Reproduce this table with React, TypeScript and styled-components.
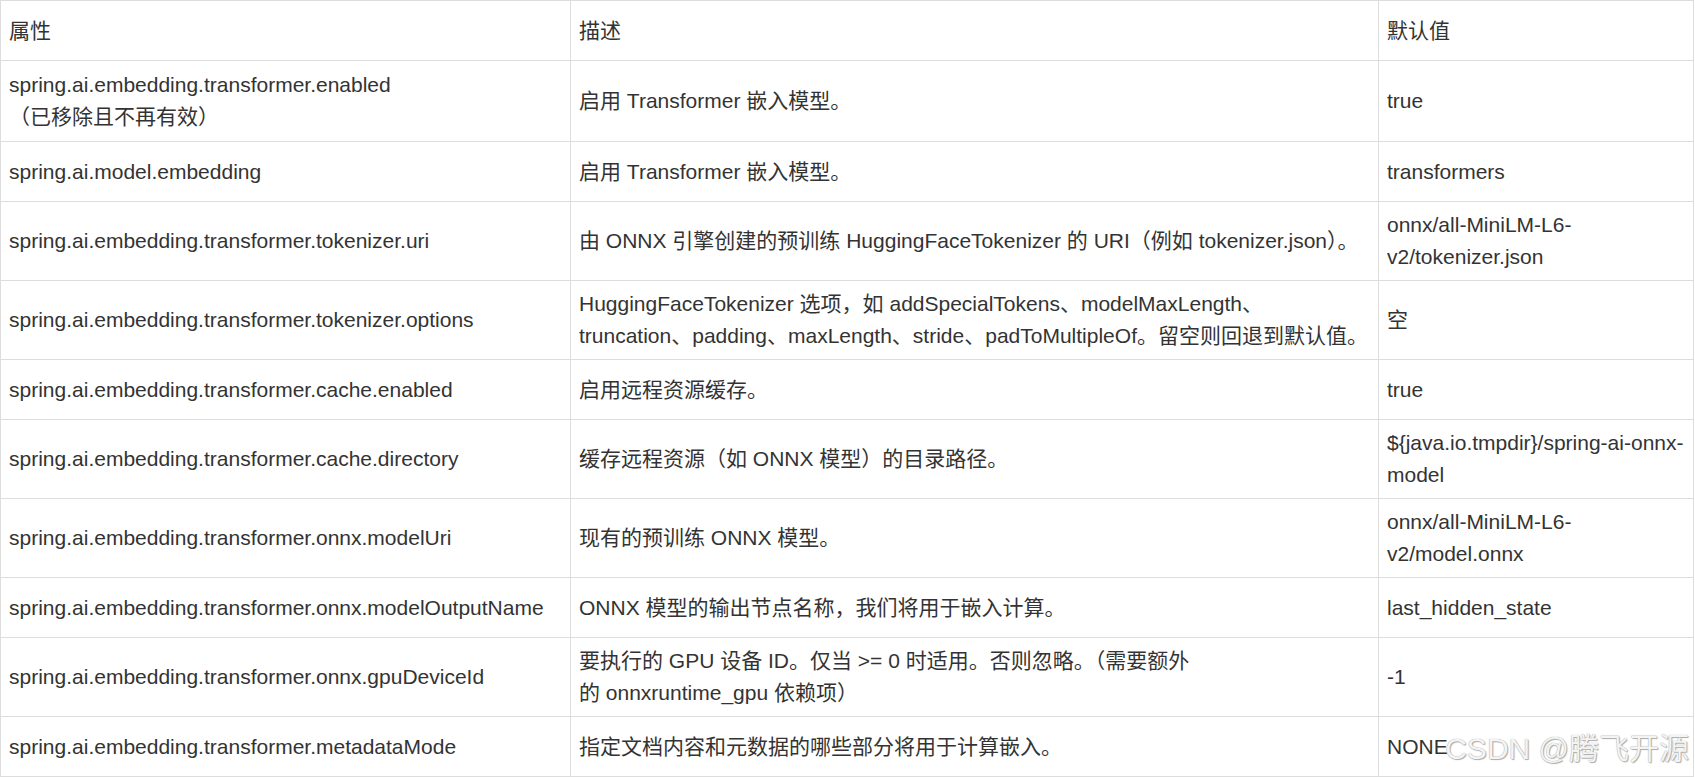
import styled, { createGlobalStyle } from 'styled-components'

const GlobalStyle = createGlobalStyle`
  html, body {
    margin: 0;
    padding: 0;
    background: #ffffff;
  }
  body {
    font-family: "Liberation Sans", Arial, "Noto Sans CJK SC", sans-serif;
    color: #333333;
  }
`

interface Row {
  name: string[]
  desc: string[]
  value: string[]
}

const rows: Row[] = [
  {
    name: ['spring.ai.embedding.transformer.enabled', '（已移除且不再有效）'],
    desc: ['启用 Transformer 嵌入模型。'],
    value: ['true'],
  },
  {
    name: ['spring.ai.model.embedding'],
    desc: ['启用 Transformer 嵌入模型。'],
    value: ['transformers'],
  },
  {
    name: ['spring.ai.embedding.transformer.tokenizer.uri'],
    desc: ['由 ONNX 引擎创建的预训练 HuggingFaceTokenizer 的 URI（例如 tokenizer.json）。'],
    value: ['onnx/all-MiniLM-L6-', 'v2/tokenizer.json'],
  },
  {
    name: ['spring.ai.embedding.transformer.tokenizer.options'],
    desc: [
      'HuggingFaceTokenizer 选项，如 addSpecialTokens、modelMaxLength、',
      'truncation、padding、maxLength、stride、padToMultipleOf。留空则回退到默认值。',
    ],
    value: ['空'],
  },
  {
    name: ['spring.ai.embedding.transformer.cache.enabled'],
    desc: ['启用远程资源缓存。'],
    value: ['true'],
  },
  {
    name: ['spring.ai.embedding.transformer.cache.directory'],
    desc: ['缓存远程资源（如 ONNX 模型）的目录路径。'],
    value: ['${java.io.tmpdir}/spring-ai-onnx-', 'model'],
  },
  {
    name: ['spring.ai.embedding.transformer.onnx.modelUri'],
    desc: ['现有的预训练 ONNX 模型。'],
    value: ['onnx/all-MiniLM-L6-', 'v2/model.onnx'],
  },
  {
    name: ['spring.ai.embedding.transformer.onnx.modelOutputName'],
    desc: ['ONNX 模型的输出节点名称，我们将用于嵌入计算。'],
    value: ['last_hidden_state'],
  },
  {
    name: ['spring.ai.embedding.transformer.onnx.gpuDeviceId'],
    desc: ['要执行的 GPU 设备 ID。仅当 >= 0 时适用。否则忽略。（需要额外', '的 onnxruntime_gpu 依赖项）'],
    value: ['-1'],
  },
  {
    name: ['spring.ai.embedding.transformer.metadataMode'],
    desc: ['指定文档内容和元数据的哪些部分将用于计算嵌入。'],
    value: ['NONE'],
  },
]

const Lines = ({ lines }: { lines: string[] }) => (
  <>
    {lines.map((line, i) => (
      <span key={i}>
        {i > 0 && <br />}
        {line}
      </span>
    ))}
  </>
)

const App = () => {
  return (
    <>
      <GlobalStyle />
      <Page>
        <Table>
          <colgroup>
            <col style={{ width: 570 }} />
            <col style={{ width: 808 }} />
            <col />
          </colgroup>
          <thead>
            <tr>
              <HeadCell>属性</HeadCell>
              <HeadCell>描述</HeadCell>
              <HeadCell>默认值</HeadCell>
            </tr>
          </thead>
          <tbody>
            {rows.map((row, i) => (
              <tr key={row.name[0]}>
                <Cell $tall={i === 0}><Lines lines={row.name} /></Cell>
                <Cell $tall={i === 0}><Lines lines={row.desc} /></Cell>
                <Cell $tall={i === 0}><Lines lines={row.value} /></Cell>
              </tr>
            ))}
          </tbody>
        </Table>
        <Watermark>CSDN @腾飞开源</Watermark>
      </Page>
    </>
  )
}

const Page = styled.div`
  position: relative;
  width: 1694px;
`

const Table = styled.table`
  width: 1694px;
  border-collapse: collapse;
  table-layout: fixed;
  font-size: 21px;
  line-height: 32px;
`

const HeadCell = styled.th`
  height: 60px;
  box-sizing: border-box;
  padding: 7px 8px;
  border: 1px solid #dddddd;
  text-align: left;
  font-weight: normal;
  vertical-align: middle;
`

const Cell = styled.td<{ $tall?: boolean }>`
  height: 60px;
  box-sizing: border-box;
  padding: ${(p) => (p.$tall ? '8px 8px' : '7px 8px')};
  border: 1px solid #dddddd;
  vertical-align: middle;
  white-space: nowrap;
`

const Watermark = styled.div`
  position: absolute;
  right: 5px;
  bottom: 12px;
  font-family: "Liberation Sans", Arial, "Noto Sans CJK SC", sans-serif;
  font-size: 30px;
  line-height: 32px;
  color: #f4f4f4;
  text-shadow: 0 0 1px #8c8c8c, 1px 1px 1px #b0b0b0;
  pointer-events: none;
`

export default App
